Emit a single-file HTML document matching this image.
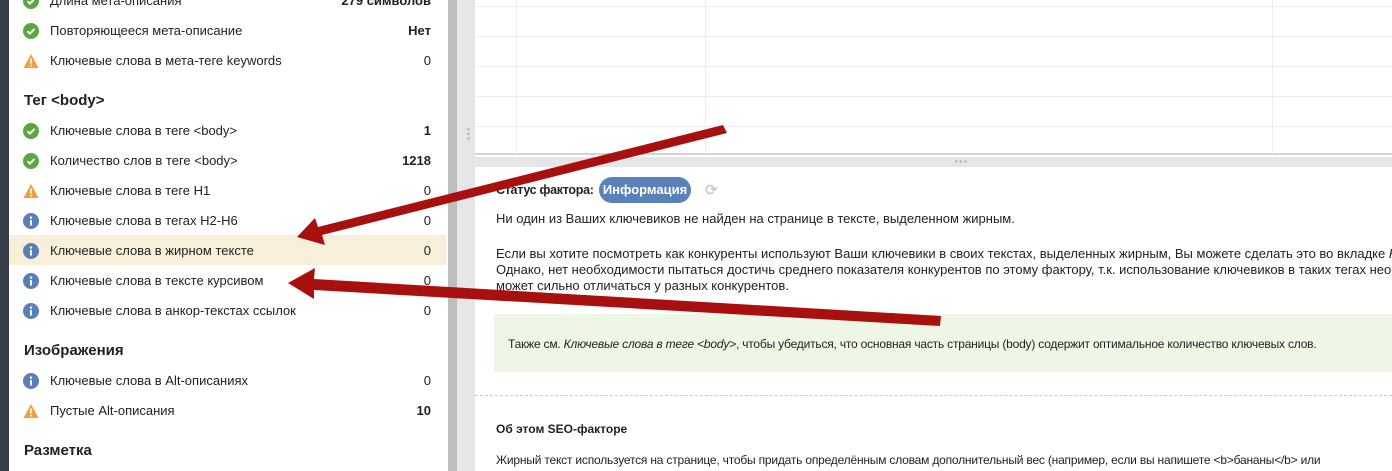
<!DOCTYPE html>
<html><head><meta charset="utf-8"><style>
*{margin:0;padding:0;box-sizing:border-box}
html,body{width:1392px;height:471px;overflow:hidden}
body{position:relative;background:#fff;font-family:"Liberation Sans",sans-serif;color:#222}
#wrap{position:absolute;left:0;top:0;width:1392px;height:471px;overflow:hidden}
.dark{position:absolute;left:0;top:0;width:9px;height:471px;background:#363d47}
.left{position:absolute;left:9px;top:0;width:439px;height:471px;background:#fff}
.sb{position:absolute;left:448px;top:0;width:9px;height:471px;background:#bdbdbd}
.gut{position:absolute;left:457px;top:0;width:18px;height:471px;background:#e6e6e6}
.row{position:absolute;left:9px;width:437px;height:30px;font-size:13px;line-height:32px}
.row .t{position:absolute;left:41px;top:0}
.row .v{position:absolute;right:15px;top:0;font-weight:bold}
.row svg{position:absolute;left:14px;top:8px}
.hl{background:#f7efd9}
.h{position:absolute;left:24px;font-size:15px;font-weight:bold;line-height:22px}
.grid{position:absolute;left:475px;top:0;width:917px;height:155px;background:#fff;border-bottom:2px solid #d4d4d4}
.hl2{position:absolute;left:475px;width:917px;height:1px;background:#ececec}
.vl{position:absolute;top:0;width:1px;height:155px;background:#ececec}
.band{position:absolute;left:475px;top:157px;width:917px;height:10px;background:#e6e6e6}
.txt{position:absolute;left:496px;font-size:13px;line-height:20px;white-space:nowrap}
.btn{position:absolute;left:599px;top:177px;width:92px;height:26px;border-radius:13px;background:#5a82b8;color:#fff;font-weight:bold;font-size:13px;line-height:26px;text-align:center}
.green{position:absolute;left:494px;top:314px;width:898px;height:58px;background:#eef7e6}
.dash{position:absolute;left:475px;top:395px;width:917px;border-top:1px dashed #ccc}
</style></head><body><div id="wrap">
<div class="dark"></div><div class="left"></div><div class="sb"></div><div class="gut"></div>

<div class="row" style="top:-15px"><svg width="16" height="16"><circle cx="8" cy="8" r="8" fill="#5aa640"/><path d="M4.5 8.3l2.4 2.3 4.6-4.7" stroke="#fff" stroke-width="2" fill="none"/></svg><span class="t">Длина мета-описания</span><span class="v">279 символов</span></div>
<div class="row" style="top:15px"><svg width="16" height="16"><circle cx="8" cy="8" r="8" fill="#5aa640"/><path d="M4.5 8.3l2.4 2.3 4.6-4.7" stroke="#fff" stroke-width="2" fill="none"/></svg><span class="t">Повторяющееся мета-описание</span><span class="v">Нет</span></div>
<div class="row" style="top:45px"><svg width="16" height="16"><path d="M8 1L15.5 15H0.5Z" fill="#f0a040"/><rect x="7.2" y="5.5" width="1.6" height="5" fill="#fff"/><rect x="7.2" y="11.8" width="1.6" height="1.6" fill="#fff"/></svg><span class="t">Ключевые слова в мета-теге keywords</span><span class="v" style="font-weight:normal">0</span></div>
<div class="h" style="top:90px">Тег &lt;body&gt;</div>
<div class="row" style="top:115px"><svg width="16" height="16"><circle cx="8" cy="8" r="8" fill="#5aa640"/><path d="M4.5 8.3l2.4 2.3 4.6-4.7" stroke="#fff" stroke-width="2" fill="none"/></svg><span class="t">Ключевые слова в теге &lt;body&gt;</span><span class="v">1</span></div>
<div class="row" style="top:145px"><svg width="16" height="16"><circle cx="8" cy="8" r="8" fill="#5aa640"/><path d="M4.5 8.3l2.4 2.3 4.6-4.7" stroke="#fff" stroke-width="2" fill="none"/></svg><span class="t">Количество слов в теге &lt;body&gt;</span><span class="v">1218</span></div>
<div class="row" style="top:175px"><svg width="16" height="16"><path d="M8 1L15.5 15H0.5Z" fill="#f0a040"/><rect x="7.2" y="5.5" width="1.6" height="5" fill="#fff"/><rect x="7.2" y="11.8" width="1.6" height="1.6" fill="#fff"/></svg><span class="t">Ключевые слова в теге H1</span><span class="v" style="font-weight:normal">0</span></div>
<div class="row" style="top:205px"><svg width="16" height="16"><circle cx="8" cy="8" r="8" fill="#5a7fb5"/><rect x="7" y="7" width="2" height="5.5" fill="#fff"/><circle cx="8" cy="4.6" r="1.2" fill="#fff"/></svg><span class="t">Ключевые слова в тегах H2-H6</span><span class="v" style="font-weight:normal">0</span></div>
<div class="row hl" style="top:235px"><svg width="16" height="16"><circle cx="8" cy="8" r="8" fill="#5a7fb5"/><rect x="7" y="7" width="2" height="5.5" fill="#fff"/><circle cx="8" cy="4.6" r="1.2" fill="#fff"/></svg><span class="t">Ключевые слова в жирном тексте</span><span class="v" style="font-weight:normal">0</span></div>
<div class="row" style="top:265px"><svg width="16" height="16"><circle cx="8" cy="8" r="8" fill="#5a7fb5"/><rect x="7" y="7" width="2" height="5.5" fill="#fff"/><circle cx="8" cy="4.6" r="1.2" fill="#fff"/></svg><span class="t">Ключевые слова в тексте курсивом</span><span class="v" style="font-weight:normal">0</span></div>
<div class="row" style="top:295px"><svg width="16" height="16"><circle cx="8" cy="8" r="8" fill="#5a7fb5"/><rect x="7" y="7" width="2" height="5.5" fill="#fff"/><circle cx="8" cy="4.6" r="1.2" fill="#fff"/></svg><span class="t">Ключевые слова в анкор-текстах ссылок</span><span class="v" style="font-weight:normal">0</span></div>
<div class="h" style="top:340px">Изображения</div>
<div class="row" style="top:365px"><svg width="16" height="16"><circle cx="8" cy="8" r="8" fill="#5a7fb5"/><rect x="7" y="7" width="2" height="5.5" fill="#fff"/><circle cx="8" cy="4.6" r="1.2" fill="#fff"/></svg><span class="t">Ключевые слова в Alt-описаниях</span><span class="v" style="font-weight:normal">0</span></div>
<div class="row" style="top:395px"><svg width="16" height="16"><path d="M8 1L15.5 15H0.5Z" fill="#f0a040"/><rect x="7.2" y="5.5" width="1.6" height="5" fill="#fff"/><rect x="7.2" y="11.8" width="1.6" height="1.6" fill="#fff"/></svg><span class="t">Пустые Alt-описания</span><span class="v">10</span></div>
<div class="h" style="top:440px">Разметка</div>

<div class="grid"></div>
<div class="hl2" style="top:6px"></div><div class="hl2" style="top:36px"></div><div class="hl2" style="top:66px"></div><div class="hl2" style="top:96px"></div><div class="hl2" style="top:126px"></div>
<div class="vl" style="left:516px"></div><div class="vl" style="left:705px"></div><div class="vl" style="left:1272px"></div>
<div style="position:absolute;left:467px;top:127px;width:3px;height:14px;background:radial-gradient(circle,#bbb 1.2px,transparent 1.5px) 0 0/3px 4.6px"></div>
<div class="band"></div>
<div style="position:absolute;left:954px;top:160px;width:14px;height:3px;background:radial-gradient(circle,#bbb 1.2px,transparent 1.5px) 0 0/4.6px 3px"></div>

<div class="txt" style="top:180px;font-weight:bold;font-size:12.5px;letter-spacing:-0.3px">Статус фактора:</div>
<div class="btn">Информация</div>
<div style="position:absolute;left:705px;top:181px;color:#ccc;font-size:15px;font-weight:bold">⟳</div>
<div class="txt" style="top:209px">Ни один из Ваших ключевиков не найден на странице в тексте, выделенном жирным.</div>
<div class="txt" style="top:244px">Если вы хотите посмотреть как конкуренты используют Ваши ключевики в своих текстах, выделенных жирным, Вы можете сделать это во вкладке <i>Конкуренты</i></div>
<div class="txt" style="top:260px">Однако, нет необходимости пытаться достичь среднего показателя конкурентов по этому фактору, т.к. использование ключевиков в таких тегах необязательно</div>
<div class="txt" style="top:276px">может сильно отличаться у разных конкурентов.</div>
<div class="green"></div>
<div class="txt" style="top:334px;left:508px;font-size:12px;letter-spacing:-0.2px">Также см. <i>Ключевые слова в теге &lt;body&gt;</i>, чтобы убедиться, что основная часть страницы (body) содержит оптимальное количество ключевых слов.</div>
<div class="dash"></div>
<div class="txt" style="top:419px;font-size:12px;font-weight:bold">Об этом SEO-факторе</div>
<div class="txt" style="top:450px;font-size:12px;letter-spacing:-0.2px">Жирный текст используется на странице, чтобы придать определённым словам дополнительный вес (например, если вы напишете &lt;b&gt;бананы&lt;/b&gt; или</div>

<svg style="position:absolute;left:0;top:0" width="1392" height="471">
<polygon points="723,125 727,133 322,235 325,245 297,237 315,218 318,227" fill="#a80f0f"/>
<polygon points="941,316 940,326 314,290 314,299 288,283 315,268 314,279" fill="#a80f0f"/>
</svg>
</div></body></html>
